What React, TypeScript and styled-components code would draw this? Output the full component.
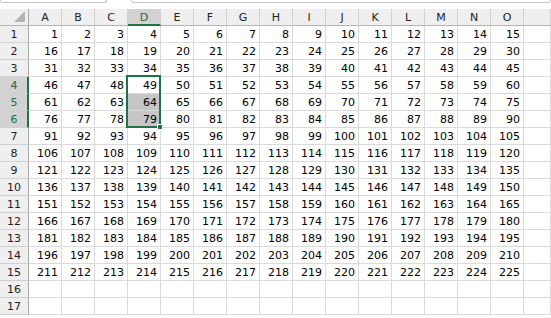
import React from 'react';
import styled, { createGlobalStyle } from 'styled-components';

const GlobalStyle = createGlobalStyle`
  html, body {
    margin: 0;
    padding: 0;
    background: #ffffff;
    overflow: hidden;
  }
  * {
    box-sizing: border-box;
  }
`;

const ROW_HEAD = 29;
const COL_W = 33;
const ROW_H = 17;
const HEAD_H = 17;
const COLS = 'ABCDEFGHIJKLMNO'.split('');
const ROWS = 17;
const DATA_ROWS = 15;

const SEL = { col: 3, top: 3, bottom: 5 };

const Sheet = styled.div`
  width: 551px;
  height: 318px;
  font-family: 'DejaVu Sans', 'Liberation Sans', sans-serif;
  font-size: 11px;
  color: #000;
  display: flex;
  flex-direction: column;
`;

const TopBar = styled.div`
  height: 9px;
  display: flex;
  gap: 24px;
  background: #fff;
`;

const BarBox = styled.div<{ $w?: number }>`
  height: 3px;
  ${(p) => (p.$w ? `width: ${p.$w}px;` : 'flex: 1;')}
  border: 1px solid #c8c8c8;
  border-top: none;
  border-radius: 0 0 4px 4px;
`;

const GridWrap = styled.div`
  position: relative;
  flex: 1;
`;

const Grid = styled.div`
  display: grid;
  grid-template-columns: ${ROW_HEAD}px repeat(${COLS.length}, ${COL_W}px) 1fr;
  grid-template-rows: ${HEAD_H}px repeat(${ROWS}, ${ROW_H}px);
`;

const Corner = styled.div`
  background: #efefef;
  border-right: 1px solid #a8a8a8;
  border-bottom: 1px solid #b4b4b4;
  display: flex;
  justify-content: flex-end;
  align-items: flex-end;
  padding: 0 3px 3px 0;
`;

const ColHead = styled.div<{ $sel?: boolean }>`
  background: ${(p) => (p.$sel ? '#d2d2d2' : '#efefef')};
  color: ${(p) => (p.$sel ? '#1e6b44' : '#222')};
  border-right: 1px solid #d0d0d0;
  border-bottom: ${(p) => (p.$sel ? '2px solid #217346' : '1px solid #b4b4b4')};
  display: flex;
  align-items: center;
  justify-content: center;
  padding-top: ${(p) => (p.$sel ? 1 : 0)}px;
`;

const RowHead = styled.div<{ $sel?: boolean }>`
  background: ${(p) => (p.$sel ? '#d2d2d2' : '#efefef')};
  color: ${(p) => (p.$sel ? '#1e6b44' : '#222')};
  border-right: ${(p) => (p.$sel ? '2px solid #217346' : '1px solid #a8a8a8')};
  border-bottom: 1px solid #d0d0d0;
  display: flex;
  align-items: center;
  justify-content: center;
  padding-left: ${(p) => (p.$sel ? 1 : 0)}px;
`;

const Cell = styled.div<{ $shade?: boolean }>`
  background: ${(p) => (p.$shade ? '#c6c6c6' : '#fff')};
  border-right: 1px solid #dadada;
  border-bottom: 1px solid #dadada;
  display: flex;
  align-items: center;
  justify-content: flex-end;
  padding-right: 3px;
  line-height: 1;
`;

const Selection = styled.div`
  position: absolute;
  border: 2px solid #217346;
  pointer-events: none;
`;

const Handle = styled.div`
  position: absolute;
  right: -4px;
  bottom: -4px;
  width: 6px;
  height: 6px;
  background: #217346;
  border: 1px solid #fff;
`;

function SelectAll() {
  return (
    <svg width="11" height="11" viewBox="0 0 11 11">
      <polygon points="11,0 11,11 0,11" fill="#b5b5b5" />
    </svg>
  );
}

function App() {
  const selStyle = {
    left: ROW_HEAD + SEL.col * COL_W - 2,
    top: HEAD_H + SEL.top * ROW_H - 2,
    width: COL_W + 2,
    height: (SEL.bottom - SEL.top + 1) * ROW_H + 2,
  };

  return (
    <Sheet>
      <GlobalStyle />
      <TopBar>
        <BarBox $w={107} />
        <BarBox />
      </TopBar>
      <GridWrap>
        <Grid>
          <Corner>
            <SelectAll />
          </Corner>
          {COLS.map((c, i) => (
            <ColHead key={c} $sel={i === SEL.col}>
              {c}
            </ColHead>
          ))}
          <ColHead />
          {Array.from({ length: ROWS }, (_, r) => (
            <React.Fragment key={r}>
              <RowHead $sel={r >= SEL.top && r <= SEL.bottom}>{r + 1}</RowHead>
              {COLS.map((c, ci) => (
                <Cell key={c} $shade={ci === SEL.col && r > SEL.top && r <= SEL.bottom}>
                  {r < DATA_ROWS ? r * COLS.length + ci + 1 : ''}
                </Cell>
              ))}
              <Cell />
            </React.Fragment>
          ))}
        </Grid>
        <Selection style={selStyle}>
          <Handle />
        </Selection>
      </GridWrap>
    </Sheet>
  );
}

export default App;
